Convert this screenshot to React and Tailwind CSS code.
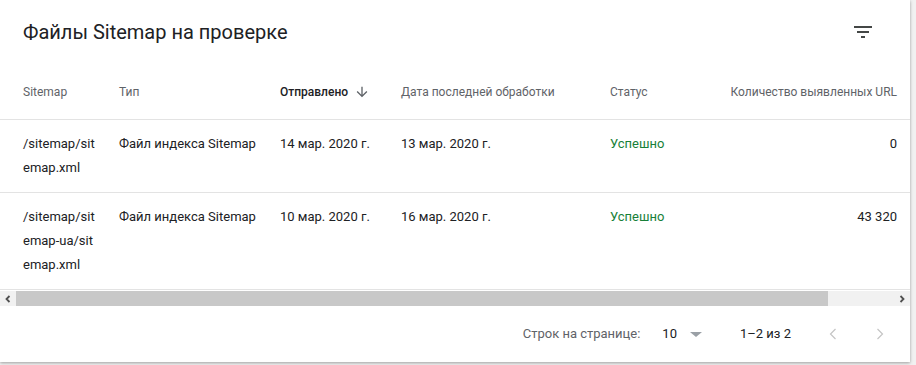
import React from "react";

const rows = [
  {
    sitemap: "/sitemap/sitemap.xml",
    type: "Файл индекса Sitemap",
    sent: "14 мар. 2020 г.",
    processed: "13 мар. 2020 г.",
    status: "Успешно",
    count: "0",
  },
  {
    sitemap: "/sitemap/sitemap-ua/sitemap.xml",
    type: "Файл индекса Sitemap",
    sent: "10 мар. 2020 г.",
    processed: "16 мар. 2020 г.",
    status: "Успешно",
    count: "43 320",
  },
];

const FilterIcon = () => (
  <svg width="24" height="24" viewBox="0 0 24 24" fill="#444746">
    <path d="M10 18h4v-2h-4v2zM3 6v2h18V6H3zm3 7h12v-2H6v2z" />
  </svg>
);

const ArrowDown = () => (
  <svg width="16" height="16" viewBox="0 0 24 24" fill="#5f6368">
    <path d="M20 12l-1.41-1.41L13 16.17V4h-2v12.17l-5.58-5.59L4 12l8 8 8-8z" />
  </svg>
);

const Chevron = ({ dir }) => (
  <svg width="24" height="24" viewBox="0 0 24 24" fill="none" stroke="#c4c4c4" strokeWidth="1.2">
    {dir === "left" ? <path d="M14.5 7l-5 5 5 5" /> : <path d="M9.5 7l5 5-5 5" />}
  </svg>
);

export default function App() {
  return (
    <div className="w-[916px] h-[365px] bg-[#f1f1f1] overflow-hidden" style={{ fontFamily: "Roboto, 'Noto Sans', sans-serif" }}>
      <div className="w-[910px] h-[362px] bg-white shadow-[0_1px_3px_rgba(0,0,0,0.35)] flex flex-col">
        {/* Header */}
        <div className="h-[64px] flex items-center justify-between pl-[23px] pr-[35px]">
          <h2 className="text-[20px] text-[#202124]">Файлы Sitemap на проверке</h2>
          <FilterIcon />
        </div>

        {/* Column titles */}
        <div className="h-[56px] flex items-center pl-[23px] pr-[13px] border-b border-[#e3e3e3] text-[12px] text-[#5f6368]">
          <div className="w-[96px] shrink-0">Sitemap</div>
          <div className="w-[161px] shrink-0">Тип</div>
          <div className="w-[121px] shrink-0 flex items-center gap-[6px] text-[#202124] font-medium">
            Отправлено <ArrowDown />
          </div>
          <div className="w-[209px] shrink-0">Дата последней обработки</div>
          <div className="flex-1">Статус</div>
          <div className="text-right">Количество выявленных URL</div>
        </div>

        {/* Rows */}
        {rows.map((r) => (
          <div key={r.sitemap} className="flex pl-[23px] pr-[13px] py-[12px] border-b border-[#e3e3e3] text-[13px] leading-[24px] text-[#202124]">
            <div className="w-[96px] shrink-0 pr-[24px] break-all">{r.sitemap}</div>
            <div className="w-[161px] shrink-0">{r.type}</div>
            <div className="w-[121px] shrink-0">{r.sent}</div>
            <div className="w-[209px] shrink-0">{r.processed}</div>
            <div className="flex-1 text-[#188038]">{r.status}</div>
            <div className="text-right">{r.count}</div>
          </div>
        ))}

        {/* Horizontal scrollbar */}
        <div className="mt-[1px] h-[15px] flex bg-[#f1f1f1]">
          <div className="w-[16px] flex items-center justify-center">
            <svg width="8" height="8" viewBox="0 0 8 8" fill="none" stroke="#505050" strokeWidth="1.8">
              <path d="M5.5 1L2.5 4l3 3" />
            </svg>
          </div>
          <div className="w-[812px] bg-[#c8c8c8]" />
          <div className="flex-1" />
          <div className="w-[17px] flex items-center justify-center">
            <svg width="8" height="8" viewBox="0 0 8 8" fill="none" stroke="#505050" strokeWidth="1.8">
              <path d="M2.5 1l3 3-3 3" />
            </svg>
          </div>
        </div>

        {/* Pagination */}
        <div className="flex-1 flex items-center justify-end pr-[18px] text-[13px] text-[#5f6368]">
          <span>Строк на странице:</span>
          <span className="ml-[22px] text-[#202124]">10</span>
          <svg className="ml-[7px]" width="24" height="24" viewBox="0 0 24 24" fill="#9aa0a6">
            <path d="M6 10l6 5 6-5z" />
          </svg>
          <span className="ml-[32px] text-[#202124]">1–2 из 2</span>
          <div className="ml-[30px] flex gap-[23px]">
            <Chevron dir="left" />
            <Chevron dir="right" />
          </div>
        </div>
      </div>
    </div>
  );
}
